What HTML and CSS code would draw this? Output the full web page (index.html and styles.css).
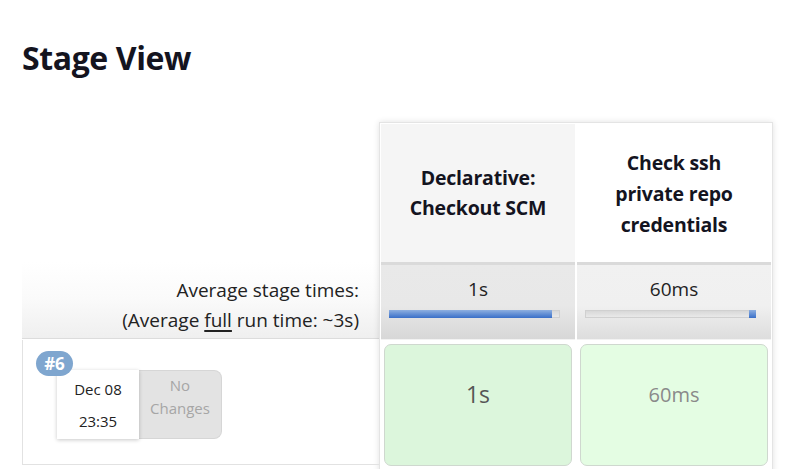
FILE: index.html
```html
<!DOCTYPE html>
<html>
<head>
<meta charset="utf-8">
<link rel="stylesheet" href="styles.css">
</head>
<body>
<h2 class="title">Stage View</h2>
<div class="view">
  <div class="left">
    <div class="l-head"></div>
    <div class="l-avg">
      <div>Average stage times:</div>
      <div>(Average <u>full</u> run time: ~3s)</div>
    </div>
    <div class="l-build">
      <span class="badge">#6</span>
      <div class="card">
        <div class="date">
          <div>Dec 08</div>
          <div>23:35</div>
        </div>
        <div class="changes">No<br>Changes</div>
      </div>
    </div>
  </div>
  <div class="stages">
    <div class="col">
      <div class="s-head s-head-alt">Declarative:<br>Checkout SCM</div>
      <div class="s-avg s-avg-alt">
        <div class="avg-time">1s</div>
        <div class="bar"><div class="fill" style="width:96.5%"></div></div>
      </div>
      <div class="s-build">
        <div class="box box-1">1s</div>
      </div>
    </div>
    <div class="col">
      <div class="s-head">Check ssh<br>private repo<br>credentials</div>
      <div class="s-avg">
        <div class="avg-time">60ms</div>
        <div class="bar"><div class="fill fill-right" style="width:4%"></div></div>
      </div>
      <div class="s-build">
        <div class="box box-2">60ms</div>
      </div>
    </div>
  </div>
</div>
</body>
</html>
```

FILE: styles.css
```css
html, body {
  margin: 0;
  padding: 0;
  background: #fff;
}
body {
  font-family: "Open Sans", "Noto Sans", sans-serif;
  color: #14141f;
  padding-left: 22px;
}
.title {
  margin: 0;
  padding-top: 37px;
  font-size: 32px;
  font-weight: 700;
  line-height: 42px;
  letter-spacing: -0.4px;
}
.view {
  display: flex;
  margin-top: 43px;
}
.left {
  width: 357px;
  display: flex;
  flex-direction: column;
}
.l-head {
  height: 140px;
}
.l-avg {
  height: 77px;
  border-bottom: 1px solid #dcdcdc;
  background: linear-gradient(#ffffff 0%, #fafafa 50%, #efefef 100%);
  text-align: right;
  padding-right: 20px;
  box-sizing: border-box;
  padding-top: 13px;
  font-size: 19px;
  line-height: 30px;
  color: #222;
}
.l-avg u {
  text-decoration-thickness: 2px;
  text-underline-offset: 3px;
}
.l-build {
  position: relative;
  height: 125px;
  border-left: 1px solid #e2e2e2;
  border-bottom: 1px solid #e2e2e2;
  box-sizing: border-box;
  margin-top: 1px;
}
.badge {
  position: absolute;
  left: 13px;
  top: 11px;
  width: 37px;
  height: 25px;
  border-radius: 13px;
  background: #7fa6cf;
  color: #fff;
  font-weight: 700;
  font-size: 17px;
  line-height: 25px;
  text-align: center;
  z-index: 2;
}
.card {
  display: flex;
  margin-left: 34px;
  margin-top: 30px;
  height: 69px;
}
.date {
  width: 82px;
  background: #fff;
  box-shadow: 0 1px 4px rgba(0,0,0,0.22);
  text-align: center;
  font-size: 15px;
  line-height: 32px;
  padding-top: 3px;
  box-sizing: border-box;
  color: #222;
  position: relative;
  z-index: 1;
}
.changes {
  width: 83px;
  background: #e3e3e3;
  border: 1px solid #d6d6d6;
  border-left: none;
  border-radius: 0 8px 8px 0;
  box-sizing: border-box;
  text-align: center;
  color: #a6a6a6;
  font-size: 15px;
  line-height: 23px;
  padding-top: 3px;
}
.stages {
  display: flex;
  gap: 2px;
  border: 1px solid #e4e4e4;
  border-bottom: none;
  padding: 1px 1px 0 1px;
  box-shadow: 0 0 6px rgba(0,0,0,0.12);
  background: #fff;
  width: 394px;
  box-sizing: border-box;
  height: 360px;
}
.col {
  flex: 1;
  display: flex;
  flex-direction: column;
}
.s-head {
  height: 138px;
  display: flex;
  align-items: center;
  justify-content: center;
  text-align: center;
  font-weight: 700;
  font-size: 19.5px;
  line-height: 31px;
  background: #fff;
  letter-spacing: -0.2px;
}
.s-head-alt {
  background: #f5f5f5;
  line-height: 30px;
}
.s-avg {
  height: 77px;
  border-top: 3px solid #dadada;
  box-sizing: border-box;
  background: linear-gradient(#f1f1f1 0%, #f0f0f0 55%, #dddddd 100%);
  padding: 10px 0 0;
  text-align: center;
}
.s-avg-alt {
  background: linear-gradient(#e9e9e9 0%, #e8e8e8 55%, #d7d7d7 100%);
}
.avg-time {
  font-size: 19px;
  line-height: 28px;
  color: #222;
}
.bar {
  margin: 7px 15px 0 8px;
  height: 8px;
  background: linear-gradient(#d8d8d8, #e9e9e9);
  border: 1px solid #d0d0d0;
  box-sizing: border-box;
  position: relative;
}
.fill {
  position: absolute;
  left: -1px;
  top: -1px;
  bottom: -1px;
  background: linear-gradient(#8fb0e0 0%, #5b89d2 60%, #3a6fc8 100%);
}
.fill-right {
  left: auto;
  right: -1px;
}
.s-build {
  padding: 4px 3px 0 3px;
  background: #fff;
  border-top: 1px solid #f2f2f2;
  flex: 1;
}
.box {
  height: 122px;
  border: 1px solid #cfd8cf;
  border-radius: 7px;
  box-sizing: border-box;
  display: flex;
  align-items: center;
  justify-content: center;
  font-size: 23px;
  padding-bottom: 22px;
}
.box-1 {
  background: #dcf6dc;
  color: #555;
}
.box-2 {
  background: #e4fde3;
  color: #8a8a8a;
  font-size: 20px;
}
```
